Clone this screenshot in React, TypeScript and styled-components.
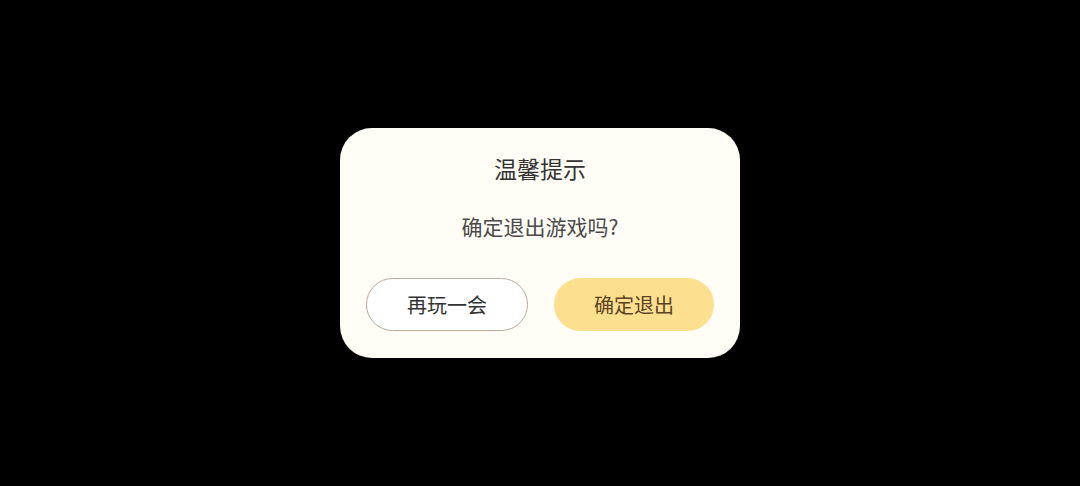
import styled, { createGlobalStyle } from "styled-components"

const GlobalStyle = createGlobalStyle`
  html, body {
    margin: 0;
    padding: 0;
    background: #000;
  }
  body {
    font-family: "Noto Sans CJK SC", "Noto Sans", sans-serif;
  }
`

const Overlay = styled.div`
  width: 1080px;
  height: 486px;
  background: #000;
  display: flex;
  align-items: center;
  justify-content: center;
`

const Dialog = styled.div`
  width: 400px;
  height: 230px;
  box-sizing: border-box;
  background: #fffdf5;
  border-radius: 32px;
  padding: 26px 26px 27px;
  display: flex;
  flex-direction: column;
  align-items: center;
`

const Title = styled.h3`
  margin: 0;
  font-size: 23px;
  line-height: 28px;
  font-weight: 400;
  color: #333333;
`

const Message = styled.p`
  margin: 30px 0 0;
  font-size: 21px;
  line-height: 28px;
  font-weight: 400;
  color: #4a4a4a;
`

const Actions = styled.div`
  margin-top: auto;
  width: 100%;
  display: flex;
  gap: 26px;
`

const Button = styled.button<{ $primary?: boolean }>`
  flex: 1;
  height: 53px;
  border-radius: 27px;
  box-sizing: border-box;
  font-family: inherit;
  font-size: 20px;
  color: ${(p) => (p.$primary ? "#5e4224" : "#333333")};
  background: ${(p) => (p.$primary ? "#fde08f" : "#ffffff")};
  border: ${(p) => (p.$primary ? "none" : "1px solid #bba99a")};
  cursor: pointer;
  padding: 0;
`

const App = () => {
  return (
    <Overlay>
      <GlobalStyle />
      <Dialog>
        <Title>温馨提示</Title>
        <Message>确定退出游戏吗?</Message>
        <Actions>
          <Button>再玩一会</Button>
          <Button $primary>确定退出</Button>
        </Actions>
      </Dialog>
    </Overlay>
  )
}

export default App
